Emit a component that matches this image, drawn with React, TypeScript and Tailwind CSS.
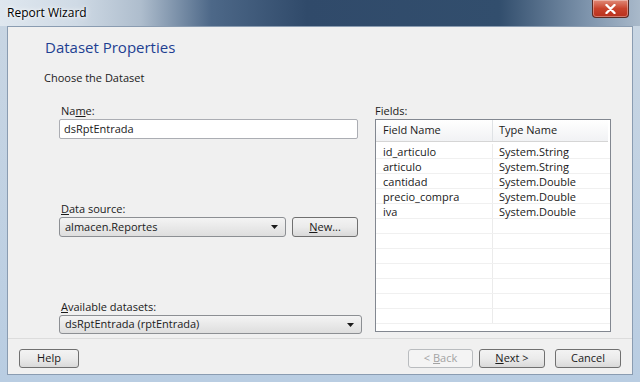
import React from "react";

const font = { fontFamily: '"Open Sans", "Noto Sans", "Liberation Sans", sans-serif' };

function Arrow() {
  return (
    <svg width="7" height="4" viewBox="0 0 7 4" className="shrink-0">
      <path d="M0 0 H7 L3.5 4 Z" fill="#1a1a1a" />
    </svg>
  );
}

function Select({ value, className }: { value: string; className: string }) {
  return (
    <div
      className={`flex items-center justify-between rounded-[3px] border border-[#8c8f93] bg-gradient-to-b from-[#f4f4f4] to-[#dedede] pl-[5px] pr-[7px] text-[11px] text-[#1a1a1a] ${className}`}
    >
      <span>{value}</span>
      <Arrow />
    </div>
  );
}

function Button({
  children,
  className,
  disabled,
}: {
  children: React.ReactNode;
  className: string;
  disabled?: boolean;
}) {
  return (
    <div
      className={`flex h-[19px] items-center justify-center rounded-[3px] border text-[11px] ${
        disabled
          ? "border-[#b9bcbf] bg-[#f4f4f4] text-[#a3a3a3]"
          : "border-[#707070] bg-gradient-to-b from-[#f3f3f3] via-[#ebebeb] to-[#d9d9d9] text-[#1a1a1a]"
      } ${className}`}
    >
      {children}
    </div>
  );
}

const fields = [
  ["id_articulo", "System.String"],
  ["articulo", "System.String"],
  ["cantidad", "System.Double"],
  ["precio_compra", "System.Double"],
  ["iva", "System.Double"],
  ["", ""],
  ["", ""],
  ["", ""],
  ["", ""],
  ["", ""],
  ["", ""],
  ["", ""],
];

export default function App() {
  return (
    <div
      style={font}
      className="flex h-[382px] w-[640px] flex-col overflow-hidden bg-gradient-to-b from-[#c9d6e3] to-[#b9cde2]"
    >
      {/* title bar */}
      <div className="relative h-[26px] shrink-0 bg-[linear-gradient(90deg,#dfe7ef_0%,#cfdae5_12%,#aebdcd_22%,#4d6888_33%,#304a6a_48%,#324e6d_78%,#7f95ad_92%,#a9b9ca_100%)]">
        <span className="absolute left-[7px] top-[4px] text-[12px] text-black [text-shadow:0_0_6px_#ffffff,0_0_3px_#ffffff]">
          Report Wizard
        </span>
        <div className="absolute right-[11px] top-0 flex h-[18px] w-[37px] items-center justify-center rounded-b-[4px] border border-t-0 border-[#5a2a22] bg-gradient-to-b from-[#e08a78] via-[#c8432c] to-[#b8301c] shadow-[inset_0_0_0_1px_rgba(255,255,255,0.35)]">
          <svg width="11" height="10" viewBox="0 0 11 10">
            <path d="M1.5 1 L9.5 9 M9.5 1 L1.5 9" stroke="#ffffff" strokeWidth="2.4" strokeLinecap="round" />
          </svg>
        </div>
      </div>

      {/* client area */}
      <div className="mx-[7px] mb-[7px] flex flex-1 flex-col border border-[#8a9cb1] bg-[#f0f0f0]">
        <div className="pl-[37px] pt-[10px] text-[15px] leading-[20px] text-[#1e3f92]">Dataset Properties</div>
        <div className="mt-[13px] pl-[36px] text-[11px] leading-[16px] text-[#1a1a1a]">Choose the Dataset</div>

        <div className="mt-[18px] flex flex-1 pl-[51px]">
          {/* left column */}
          <div className="flex w-[303px] flex-col text-[11px] text-[#1a1a1a]">
            <div className="pl-[2px] leading-[14px]">
              Na<span className="underline">m</span>e:
            </div>
            <div className="mt-[1px] flex h-[20px] w-[299px] items-center rounded-[2px] border border-[#abadb3] bg-white pl-[4px]">
              dsRptEntrada
            </div>
            <div className="mt-[63px] pl-[2px] leading-[14px]">
              <span className="underline">D</span>ata source:
            </div>
            <div className="mt-[1px] flex gap-[6px]">
              <Select value="almacen.Reportes" className="h-[20px] w-[227px]" />
              <Button className="h-[20px] w-[66px]">
                <span className="underline">N</span>ew...
              </Button>
            </div>
            <div className="mt-[63px] pl-[2px] leading-[14px]">
              <span className="underline">A</span>vailable datasets:
            </div>
            <Select value="dsRptEntrada (rptEntrada)" className="mt-[1px] h-[19px] w-[303px]" />
          </div>

          {/* right column */}
          <div className="ml-[13px] flex flex-col text-[11px] text-[#1a1a1a]">
            <div className="leading-[14px]">Fields:</div>
            <div className="mt-[1px] h-[213px] w-[236px] overflow-hidden border border-[#828790] bg-white">
              <div className="flex h-[22px] w-[232px] items-center border-b border-[#d5d5d5] bg-gradient-to-b from-[#ffffff] to-[#f1f2f4]">
                <div className="flex h-full w-[117px] items-center border-r border-[#dfe2e5] pl-[7px]">Field Name</div>
                <div className="pl-[6px]">Type Name</div>
              </div>
              <div className="mt-[2px]">
                {fields.map(([n, t], i) => (
                  <div key={i} className="flex h-[15px] items-center border-b border-[#f0f0f0]">
                    <div className="flex h-full w-[117px] items-center border-r border-[#ebebeb] pl-[7px] leading-[15px]">{n}</div>
                    <div className="pl-[6px] leading-[15px]">{t}</div>
                  </div>
                ))}
              </div>
            </div>
          </div>
        </div>

        {/* footer */}
        <div className="mt-[3px] flex h-[36px] items-center border-t border-[#dcdcdc] px-[11px] pt-[3px]">
          <Button className="w-[60px]">Help</Button>
          <div className="flex-1" />
          <Button disabled className="w-[65px]">
            &lt; <span className="ml-[3px] underline">B</span>ack
          </Button>
          <Button className="ml-[6px] w-[66px]">
            <span className="underline">N</span>ext &gt;
          </Button>
          <Button className="ml-[10px] w-[66px]">Cancel</Button>
        </div>
      </div>
    </div>
  );
}
